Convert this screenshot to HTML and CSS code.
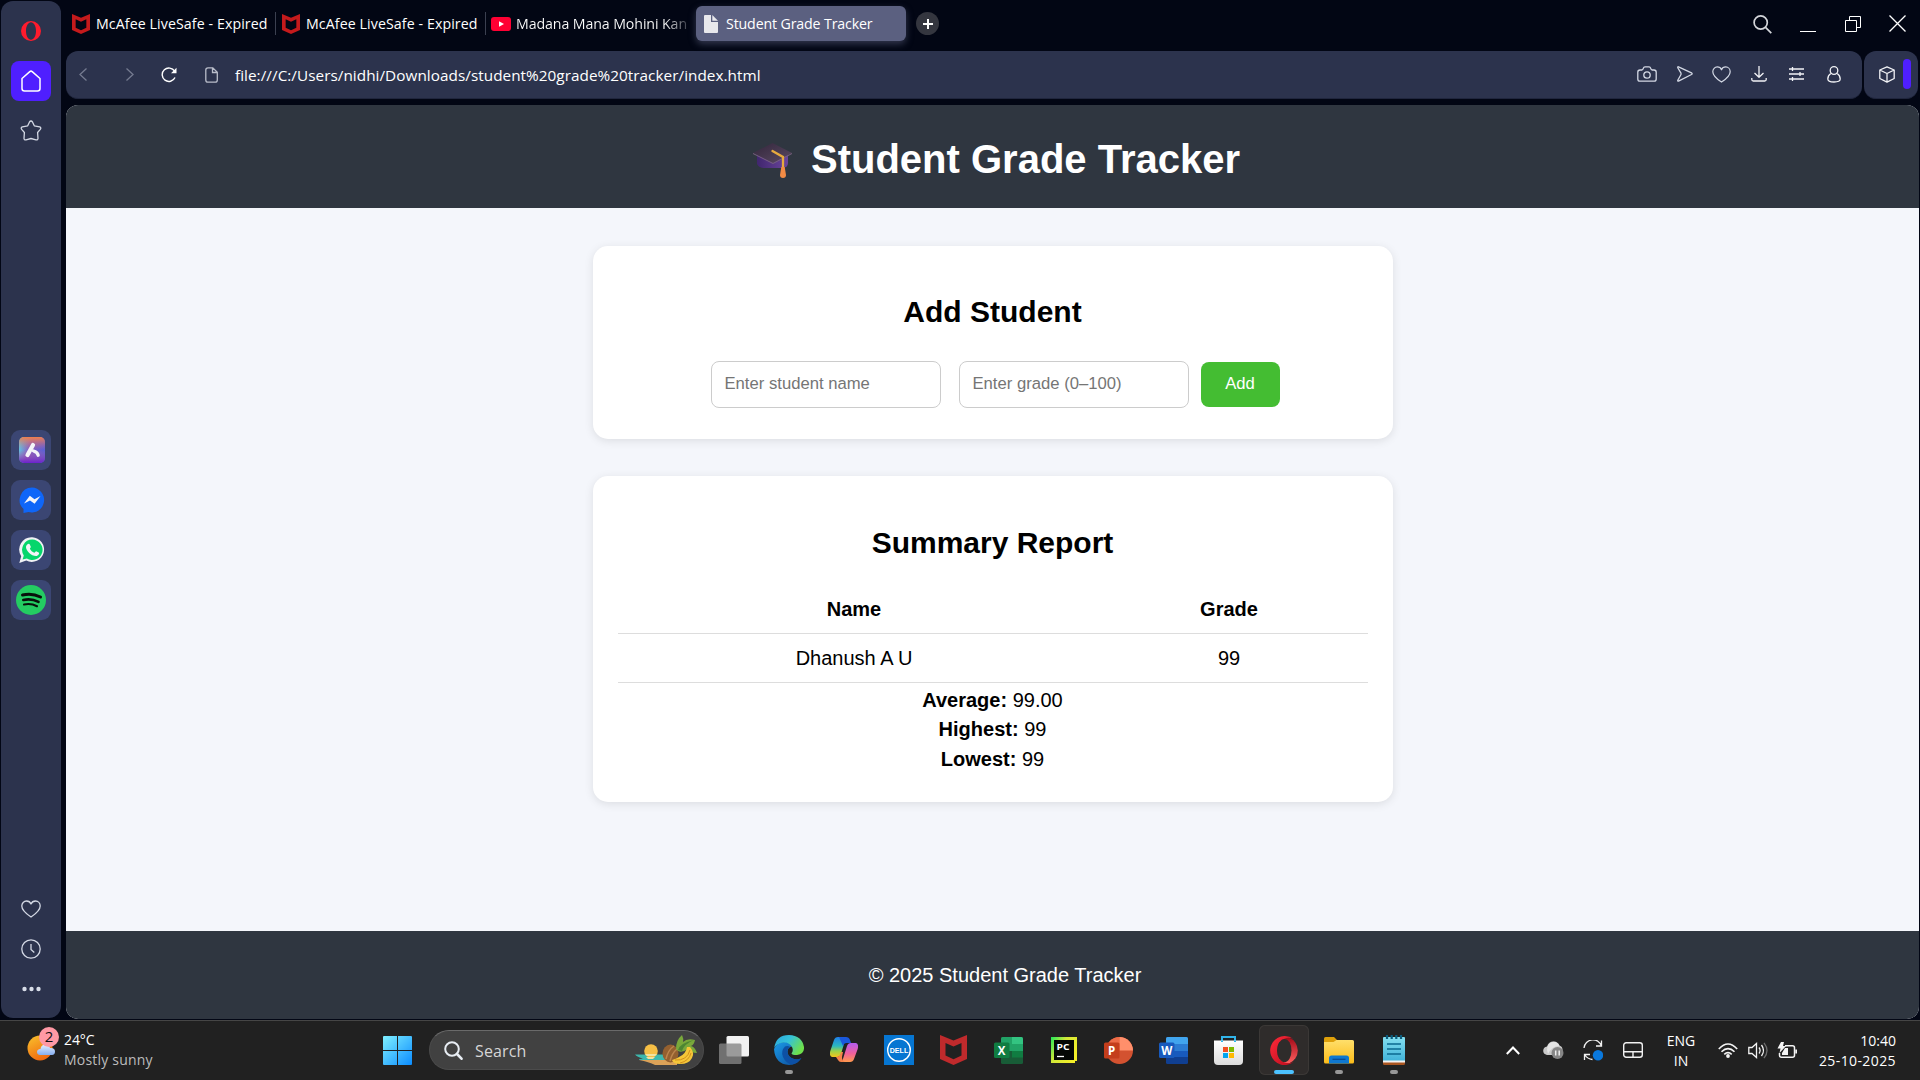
FILE: index.html
```html
<!DOCTYPE html>
<html lang="en">
<head>
<meta charset="utf-8">
<title>Student Grade Tracker</title>
<link rel="stylesheet" href="styles.css">
</head>
<body>
<svg class="defs" width="0" height="0">
  <defs>
    <linearGradient id="win" x1="0" y1="0" x2="1" y2="1"><stop offset="0" stop-color="#7ff0ff"/><stop offset="1" stop-color="#0b8cff"/></linearGradient>
    <linearGradient id="sun" x1="0" y1="0" x2=".5" y2="1"><stop offset="0" stop-color="#f9c32c"/><stop offset="1" stop-color="#f06a10"/></linearGradient>
    <linearGradient id="cloud" x1="0" y1="0" x2="0" y2="1"><stop offset="0" stop-color="#e6f0ff"/><stop offset="1" stop-color="#86aef0"/></linearGradient>
    <linearGradient id="edgeA" x1="0" y1="0" x2="1" y2=".5"><stop offset="0" stop-color="#2aa5e0"/><stop offset=".5" stop-color="#35c2d8"/><stop offset="1" stop-color="#6ee04c"/></linearGradient>
    <linearGradient id="edgeB" x1="0" y1="0" x2="1" y2="1"><stop offset="0" stop-color="#1b9be8"/><stop offset="1" stop-color="#0c4a98"/></linearGradient>
    <linearGradient id="copA" x1="0" y1="0" x2="0" y2="1"><stop offset="0" stop-color="#1f7fe8"/><stop offset=".45" stop-color="#2bb8c0"/><stop offset=".7" stop-color="#9ad24a"/><stop offset="1" stop-color="#f3c51b"/></linearGradient>
    <linearGradient id="copB" x1="0" y1="0" x2="0" y2="1"><stop offset="0" stop-color="#b45cf0"/><stop offset=".55" stop-color="#f0609c"/><stop offset="1" stop-color="#ff9a4c"/></linearGradient>
    <linearGradient id="folder" x1="0" y1="0" x2="0" y2="1"><stop offset="0" stop-color="#ffdf6b"/><stop offset="1" stop-color="#fcbc19"/></linearGradient>
    <linearGradient id="note" x1="0" y1="0" x2="0" y2="1"><stop offset="0" stop-color="#84dff0"/><stop offset="1" stop-color="#42b4da"/></linearGradient>
    <linearGradient id="opr" x1="0" y1="0" x2="1" y2="1"><stop offset="0" stop-color="#ff2a3a"/><stop offset="1" stop-color="#b80c1c"/></linearGradient>
    <linearGradient id="oprIn" x1="0" y1="0" x2="0" y2="1"><stop offset="0" stop-color="#a30a18"/><stop offset="1" stop-color="#ff6060"/></linearGradient>
    <linearGradient id="pyc" x1="0" y1="0" x2="1" y2=".6"><stop offset="0" stop-color="#20e85a"/><stop offset=".45" stop-color="#d2e838"/><stop offset="1" stop-color="#f3ee28"/></linearGradient>
    <linearGradient id="aria" x1="0" y1=".3" x2="1" y2=".6"><stop offset="0" stop-color="#58d4ea"/><stop offset=".4" stop-color="#8a5cc0"/><stop offset="1" stop-color="#5560d8"/></linearGradient>
    <linearGradient id="ariaTop" x1="0" y1="0" x2="0" y2="1"><stop offset="0" stop-color="#f0804c"/><stop offset=".5" stop-color="#c06a90" stop-opacity="0"/><stop offset="1" stop-color="#6a20d0"/></linearGradient>
    <linearGradient id="store" x1="0" y1="0" x2="0" y2="1"><stop offset="0" stop-color="#fff"/><stop offset="1" stop-color="#dcdcdc"/></linearGradient>
    <linearGradient id="cap" x1="0" y1="0" x2="1" y2="1"><stop offset="0" stop-color="#33263c"/><stop offset="1" stop-color="#5a4a62"/></linearGradient>
    <linearGradient id="capIn" x1="0" y1="0" x2="1" y2="0"><stop offset="0" stop-color="#40266e"/><stop offset="1" stop-color="#6b459c"/></linearGradient>
    <symbol id="mcafee" viewBox="0 0 27 30"><path fill-rule="evenodd" d="M0 0 13.500 5.500 27 0V24L13.500 30 0 24ZM5.500 8V20.500L13.500 24.200 21.500 20.500V8L13.500 11.500Z"/></symbol>
    <symbol id="heart" viewBox="0 0 20 18"><path d="M10 17C5.500 14 .8 10.500.8 6 .8 3.200 2.900 1 5.500 1 7.400 1 9.200 2 10 4 10.800 2 12.600 1 14.500 1c2.600 0 4.700 2.200 4.700 5 0 4.500-4.700 8-9.200 11Z"/></symbol>
  </defs>
</svg>

<div class="browser">
  <nav class="sidebar">
    <svg class="opera-logo" width="20" height="20" viewBox="0 0 20 20"><path fill="#ff1b2d" fill-rule="evenodd" d="M10 0a10 10 0 1 0 0 20 10 10 0 0 0 0-20Zm0 1.300c2.800 0 5 3.500 5 8.700s-2.200 8.700-5 8.700S5 15.200 5 10 7.200 1.300 10 1.300Z"/></svg>
    <span class="home"><svg class="line" width="20" height="22" viewBox="0 0 20 22"><path d="M1 8.500 8.800 1.600q1.200-1 2.400 0L19 8.500V18.500q0 2.500-2.500 2.500H3.500Q1 21 1 18.500Z"/></svg></span>
    <svg class="line star" width="22" height="21" viewBox="0 0 22 21"><path d="M9.400 2.200q1.600-2.400 3.200 0L14.300 5.800 19.600 6.900q2 .8.700 2.500L17.600 12.500 18 18.500q-.2 1.800-2 1.300L11 18.500 6 19.800q-1.800.5-2-1.300L4.400 12.500 1.700 9.400Q.4 7.700 2.400 6.900L7.700 5.800Z"/></svg>
    <div class="apps">
      <span class="app"><svg width="26" height="26" viewBox="0 0 26 26"><rect width="26" height="26" rx="5" fill="url(#aria)"/><rect width="26" height="26" rx="5" fill="url(#ariaTop)"/><path d="M8.500 18 14 8" stroke="#f4f4f8" stroke-width="4.200" stroke-linecap="round"/><path d="M14.500 14q4 1 4.700 4.300" stroke="#f4f4f8" stroke-width="3.200" stroke-linecap="round" fill="none"/></svg></span>
      <span class="app"><svg width="26" height="26" viewBox="0 0 26 26"><path fill="#0f66f8" d="M13 .5a12.500 12.500 0 1 1-3.500 24.600L4.500 26V22A12.500 12.500 0 0 1 13 .5Z"/><path fill="#f4f4f8" d="m5 16.500 5.800-7.700 4.700 3.400L21.500 9l-5.900 7.800-4.600-3.400Z"/></svg></span>
      <span class="app"><svg width="26" height="26" viewBox="0 0 26 26"><path fill="#f0f2f5" d="M13.300.3a12.300 12.300 0 1 1-6 23.300L.3 26l1.900-6.800A12.300 12.300 0 0 1 13.300.3Z"/><path fill="#06d66c" d="M13.300 2.600a10.200 10.200 0 1 1-5.400 18.800l-4.300 1.200 1.200-4.200A10.200 10.200 0 0 1 13.300 2.600Z"/><path fill="#f4f4f8" d="M8.600 7.300c1-1 1.900-.6 2.300.4l.9 2.100c.2.700-.8 1.500-.9 2 .9 2 2.500 3.200 4.400 4 .7-.2 1.200-1.600 1.900-1.500l2.500 1.200c1.300.8-.6 3.500-2.700 3.600C12.300 19 7 13.500 7 10.200c0-1.300.7-2.200 1.600-2.900Z"/></svg></span>
      <span class="app wide"><svg width="30" height="30" viewBox="0 0 30 30"><circle cx="15" cy="15" r="15" fill="#24cc62"/><g fill="none" stroke="#08110b" stroke-linecap="round"><path stroke-width="3" d="M6.500 10q9.500-2.300 18 2"/><path stroke-width="2.600" d="M7.300 15q8-1.900 15.200 1.900"/><path stroke-width="2.100" d="M8 19.500q7-1.500 13 1.700"/></g></svg></span>
    </div>
    <div class="side-foot">
      <svg class="line" width="20" height="18"><use href="#heart"/></svg>
      <svg class="line" width="20" height="20" viewBox="0 0 20 20"><circle cx="10" cy="10" r="9.200"/><path d="M10 5v5.500l3.300 3"/></svg>
      <svg width="19" height="6" viewBox="0 0 19 6" fill="#d8dde8"><circle cx="2.500" cy="3" r="2.200"/><circle cx="9.500" cy="3" r="2.200"/><circle cx="16.500" cy="3" r="2.200"/></svg>
    </div>
  </nav>

  <div class="main-col">
    <div class="tabbar">
      <div class="tab"><svg class="mc" width="18" height="20"><use href="#mcafee"/></svg><span>McAfee LiveSafe - Expired</span></div>
      <div class="tab"><svg class="mc" width="18" height="20"><use href="#mcafee"/></svg><span>McAfee LiveSafe - Expired</span></div>
      <div class="tab last"><svg width="20" height="14" viewBox="0 0 20 14"><rect width="20" height="14" rx="3" fill="#ff0033"/><path d="M8 4.300v5.400L13 7Z" fill="#fff"/></svg><span class="fade">Madana Mana Mohini Kan</span></div>
      <div class="tab active"><svg width="14" height="18" viewBox="0 0 14 18" fill="#e8e8ec"><path d="M1 0H7V7H14V17q0 1-1 1H1q-1 0-1-1V1Q0 0 1 0Z"/><path d="M8.300 0 14 5.800H8.300Z"/></svg><span>Student Grade Tracker</span></div>
      <span class="newtab"><svg width="10" height="10" viewBox="0 0 10 10"><path d="M5 0V10M0 5H10" stroke="#fff" stroke-width="2"/></svg></span>
      <div class="winbtns">
        <svg width="19" height="19" viewBox="0 0 19 19" fill="none" stroke="#d3d5da" stroke-width="1.700"><circle cx="7.700" cy="7.500" r="6.600"/><path d="m12.500 12.300 5.800 5.800"/></svg>
        <svg width="16" height="17" viewBox="0 0 16 17"><path d="M0 16.500H16" stroke="#fff"/></svg>
        <svg width="16" height="17" viewBox="0 0 16 17" fill="none" stroke="#fff"><path d="M.5 5.500h11v11H.5ZM4.500 5.500V1.500h11v11h-4"/></svg>
        <svg width="17" height="17" viewBox="0 0 17 17" stroke="#fff" stroke-width="1.300"><path d="m.5.5 16 16M16.500.5l-16 16"/></svg>
      </div>
    </div>

    <div class="toolbar">
      <div class="address">
        <div class="nav">
          <svg class="dim" width="8" height="13" viewBox="0 0 8 13"><path d="M7.500.5 1 6.500l6.500 6"/></svg>
          <svg class="dim" width="8" height="13" viewBox="0 0 8 13"><path d="M.5.500 7 6.500l-6.500 6"/></svg>
          <svg width="16" height="16" viewBox="0 0 16 16" fill="none" stroke="#fff" stroke-width="1.400"><path d="M13.600 4.200A6.700 6.700 0 1 0 14 10.500"/><path fill="#fff" stroke="none" d="M15.500.8V6.300H10Z"/></svg>
          <svg width="13" height="16" viewBox="0 0 13 16" fill="none" stroke="#b9bdca" stroke-width="1.300"><path d="M3 .8H7.800L12.300 5.300V13q0 2.200-2.200 2.200H3Q.8 15.200.8 13V3Q.8.800 3 .8ZM7.500 1V5.500H12"/></svg>
        </div>
        <span class="url">file:///C:/Users/nidhi/Downloads/student%20grade%20tracker/index.html</span>
        <div class="tools">
          <svg class="line" width="20" height="16" viewBox="0 0 20 16"><path d="M3 4H5Q6 3.500 6.300 2.300 6.700.8 8 .8h4q1.300 0 1.700 1.500Q14 3.500 15 4h2q2.200 0 2.200 2.200V13q0 2.200-2.200 2.200H3Q.8 15.200.8 13V6.200Q.8 4 3 4Z"/><circle cx="10" cy="9" r="3.200"/></svg>
          <svg class="line send" width="16" height="16" viewBox="0 0 16 16"><path d="M1.500.8 14.500 6.800q1.300.9 0 1.700L1.500 15.200Q.3 15.300.9 14L4 8.500V7.200L.9 2Q.3.600 1.500.8Z"/></svg>
          <svg class="line fav" width="19" height="17" viewBox="0 0 20 18"><use href="#heart"/></svg>
          <svg class="line white save" width="16" height="16" viewBox="0 0 16 16"><path d="M8 0V11M3.500 7 8 11.200 12.500 7M.8 12V13.500q0 1.500 1.500 1.500H13.700q1.500 0 1.500-1.500V12"/></svg>
          <svg class="line white setup" width="15" height="14" viewBox="0 0 15 14"><path d="M0 2H15M0 7H15M0 12H15M3.500 0V4M11 5V9M3.500 10V14"/></svg>
          <svg class="line white user" width="14" height="17" viewBox="0 0 14 17"><circle cx="7" cy="4.500" r="3.800"/><path d="M3.800 7.500Q.8 9.500.8 13q0 3 6.200 3t6.200-3q0-3.500-3-5.500"/></svg>
        </div>
      </div>
      <div class="cube">
        <svg class="line white" width="16" height="17" viewBox="0 0 16 17"><path d="M8 .8 15.200 4V12.500L8 16.200.8 12.500V4ZM.8 4 8 7.500 15.200 4M8 7.500V16"/></svg>
        <span class="marker"></span>
      </div>
    </div>

    <div class="page">
      <header class="page-head">
        <svg width="40" height="36" viewBox="0 0 40 36"><path fill="url(#capIn)" d="M4 11V21Q6 25 11 25H30Q35 24 35 20V10Z"/><path fill="url(#cap)" d="M19.500 0 39 10 20 20 0 10Z"/><path d="M0 10.500 20 20.500 39 10.500" fill="none" stroke="#77617f"/><path d="M19.500 8 30 14V26" fill="none" stroke="#e7aa3e" stroke-width="2.300" stroke-linecap="round"/><path fill="#f38b45" d="M28.300 24h3.400l1.300 8q0 3-3 3t-3-3Z"/></svg>
        <h1>Student Grade Tracker</h1>
      </header>
      <main class="content">
        <section class="card">
          <h2>Add Student</h2>
          <form class="add-form">
            <input type="text" placeholder="Enter student name">
            <input type="text" placeholder="Enter grade (0–100)">
            <button type="button">Add</button>
          </form>
        </section>
        <section class="card report">
          <h2>Summary Report</h2>
          <table>
            <thead><tr><th>Name</th><th class="grade">Grade</th></tr></thead>
            <tbody><tr><td>Dhanush A U</td><td>99</td></tr></tbody>
          </table>
          <div class="stats">
            <p><strong>Average:</strong> 99.00</p>
            <p><strong>Highest:</strong> 99</p>
            <p><strong>Lowest:</strong> 99</p>
          </div>
        </section>
      </main>
      <footer class="page-foot">© 2025 Student Grade Tracker</footer>
    </div>
  </div>
</div>

<div class="taskbar">
  <div class="weather">
    <svg width="34" height="36" viewBox="0 0 34 36"><circle cx="13" cy="22" r="12.500" fill="url(#sun)"/><path fill="url(#cloud)" d="M13 29q-3-.3-3-3t3.500-3q.5-4.500 5-4.500 3.500 0 4.500 3.500 5-.5 5 3.500 0 3.200-3 3.500Z"/><circle cx="22" cy="11" r="10" fill="#ff99a4"/><text x="22" y="16" text-anchor="middle" class="badge">2</text></svg>
    <div class="wtext"><span>24°C</span><span class="sub">Mostly sunny</span></div>
  </div>

  <div class="center">
    <span class="start"><svg width="29" height="29" viewBox="0 0 29 29"><path fill="url(#win)" d="M1 0H14V14H0V1Q0 0 1 0ZM15 0H28Q29 0 29 1V14H15ZM0 15H14V29H1Q0 29 0 28ZM15 15H29V28q0 1-1 1H15Z"/></svg></span>
    <div class="search">
      <svg width="19" height="19" viewBox="0 0 19 19" fill="none" stroke="#e8edf3" stroke-width="2"><circle cx="8" cy="8" r="6.800"/><path d="m13 13 4.500 4.700" stroke-width="2.600" stroke-linecap="round"/></svg>
      <span>Search</span>
      <svg class="fruit" width="62" height="31" viewBox="0 0 62 31"><path fill="#3db8ad" d="M0 19.500H34V25H4Q4 23.500 8 23.500 2 22 0 19.500Z"/><path fill="#dba258" d="M4 25H42V30H20Q14 27 4 25Z"/><circle cx="16" cy="16" r="6.800" fill="#f6bf45"/><path fill="#f2e2a0" d="M10 19h12l-2 2h-8Zm1 3h9l-2 2h-5Z"/><ellipse cx="35.500" cy="18.500" rx="8" ry="9" fill="#94602f"/><path d="M31 24q2-9 8-13M35 26q2-8 7-12" stroke="#bd854d" stroke-width="1.500" fill="none"/><path fill="#79a83b" d="M41 14Q41 5 47 0q2 4 1 7 4-4 12-2-1 5-4 6 4 1 6 7-6 0-9-4-6 4-10 2Z"/><path fill="#4c8632" d="M43 15Q45 8 59 5 49 9 47 16Z"/><path fill="#f5c638" d="M52 12h3q5 6 2 11-3 6-12 6-7 0-8-4 4-1 7-3 7-3 8-10Z"/><path d="M40 25q12 1 15-10M45 28q9-2 11-10" stroke="#d38f1c" stroke-width="1" fill="none"/></svg>
    </div>
    <span class="task"><svg width="30" height="28" viewBox="0 0 30 28"><rect x="7.500" width="22.500" height="20.500" rx="1.500" fill="#f2f2f2"/><rect y="7.500" width="22.500" height="20.500" rx="1.500" fill="#858585" fill-opacity=".8"/></svg></span>
    <span class="task run"><svg width="30" height="30" viewBox="0 0 30 30"><path fill="url(#edgeB)" d="M0 14Q3 7 11 7q7 0 8.500 5-1.500-.8-3.500 0-2.500 1.500-2.500 4.500 0 4 4 6.500 4.500 2.500 9.500.5Q23 30 15 30 1 29 0 14Z"/><path fill="#0d50a4" d="M11 11.500Q6.500 16 9 22q3 6.500 9 7.500 6-1 9.500-6.500-5 2.500-10 0-4-2.500-4-6.500Q13.500 13 16 12q-2-1.500-5-.5Z"/><path fill="url(#edgeA)" d="M.2 13Q2 0 15 0 28 .5 30 12q.5 7-7 8-5 0-5.500-1.500 2.300-3 .5-6.500Q15 7 10 7.500 3 8 .2 13Z"/></svg></span>
    <span class="task"><svg width="28" height="26" viewBox="0 0 28 26"><path fill="url(#copA)" d="M8 0h8l-5 17Q10 20 7 20H2Q-1 19 .3 14L4 3Q5 0 8 0Z"/><path fill="#1a58dc" d="M9 0h7q3 0 4 3l1 3h-5q-2 0-3 3Z"/><path fill="url(#copB)" d="M20 25h-8l5-16Q18 6 21 6h5q3 1 1.700 6L24 22q-1 3-4 3Z"/><path fill="#f6824a" d="M6 20q3 0 4-2l1-3 2 0-1 5q0 4 3 5h-4q-2 0-3-2Z"/></svg></span>
    <span class="task"><svg width="30" height="30" viewBox="0 0 30 30"><rect width="30" height="30" fill="#0676d2"/><circle cx="15" cy="15" r="11.300" fill="none" stroke="#fff" stroke-width="1.400"/><text x="15" y="18" text-anchor="middle" class="dell" textLength="18.500" lengthAdjust="spacingAndGlyphs">DELL</text></svg></span>
    <span class="task mct"><svg width="27" height="30"><use href="#mcafee"/></svg></span>
    <span class="task"><svg width="29" height="27" viewBox="0 0 29 27"><rect x="7" width="22" height="27" rx="1.500" fill="#185c37"/><path fill="#21a366" d="M8.500 0H18V14H7V1.500Q7 0 8.500 0Z"/><path fill="#33c481" d="M18 0h9.500Q29 0 29 1.500V7H18Z"/><path fill="#107c41" d="M18 14H29v6.500H18Z"/><path fill="#21a366" d="M18 7H29v7H18Z"/><rect y="5.500" width="15.500" height="15.500" rx="1.500" fill="#107c41"/><text x="7.700" y="17.700" text-anchor="middle" class="office">X</text></svg></span>
    <span class="task"><svg width="26" height="26" viewBox="0 0 26 26"><path fill="url(#pyc)" d="M0 0H26V24H24V26H0Z"/><rect x="3" y="3" width="20" height="20" fill="#050805"/><text x="5.500" y="13" class="pc" textLength="13" lengthAdjust="spacingAndGlyphs">PC</text><path d="M6 19.500h7" stroke="#fff" stroke-width="1.300"/></svg></span>
    <span class="task"><svg width="29" height="27" viewBox="0 0 29 27"><circle cx="15.500" cy="13.500" r="13.500" fill="#d35230"/><path fill="#ed6c47" d="M15.500 0V13.500H2A13.500 13.500 0 0 1 15.500 0Z"/><path fill="#ff8f6b" d="M15.500 0A13.500 13.500 0 0 1 29 13.500H15.500Z"/><rect y="5.500" width="15.500" height="16" rx="1.500" fill="#c43e1c"/><text x="7.700" y="17.900" text-anchor="middle" class="office">P</text></svg></span>
    <span class="task"><svg width="29" height="27" viewBox="0 0 29 27"><rect x="7" width="22" height="27" rx="1.500" fill="#103f91"/><path fill="#41a5ee" d="M8.500 0h19Q29 0 29 1.500V7H7V1.500Q7 0 8.500 0Z"/><path fill="#2b7cd3" d="M7 7H29v7H7Z"/><path fill="#185abd" d="M7 14H29v6H7Z"/><rect y="5.500" width="15.500" height="15.500" rx="1.500" fill="#185abd"/><text x="7.700" y="17.700" text-anchor="middle" class="office">W</text></svg></span>
    <span class="task"><svg width="29" height="29" viewBox="0 0 29 29"><path d="M8 6V1H21V6" fill="none" stroke="#31b5ea" stroke-width="2"/><path fill="url(#store)" d="M0 4.500H29V25q0 4-4 4H4Q0 29 0 25Z"/><path d="M8 4.500v1.500M21 4.500v1.500" stroke="#31b5ea" stroke-width="2"/><path fill="#f25022" d="M9 11h5v5H9Z"/><path fill="#7fba00" d="M15 11h5v5h-5Z"/><path fill="#00a4ef" d="M9 17h5v5H9Z"/><path fill="#ffb900" d="M15 17h5v5h-5Z"/></svg></span>
    <span class="task current"><svg width="29" height="29" viewBox="0 0 29 29"><path fill="url(#oprIn)" d="M10 4.500Q14 1 19 1.500a14 14 0 0 1 0 26Q14 28 10 24.500Z"/><path fill="url(#opr)" fill-rule="evenodd" d="M14.500 0a14.500 14.500 0 1 0 9 26Q19 28 15 26.500 7 24 7 14.500T15 2.500Q19 1 23.500 3A14.500 14.500 0 0 0 14.500 0Z"/><ellipse cx="14.500" cy="14.500" rx="7" ry="11.500" fill="#2f2c2b"/></svg></span>
    <span class="task run"><svg width="30" height="27" viewBox="0 0 30 27"><path fill="#dea00a" d="M1.500 0H10l3 3V9H0V1.500Q0 0 1.500 0Z"/><path fill="url(#folder)" d="M0 5H9.500L12.500 3H28.500Q30 3 30 4.500V25q0 1.500-1.500 1.500H1.500Q0 26.500 0 25Z"/><path fill="#0f78d0" d="M5 26.500V21q0-2.500 2.500-2.500h15Q25 18.500 25 21v5.500Z"/><path d="M8.500 22.300h13" stroke="#0a4a94" stroke-width="1.300"/></svg></span>
    <span class="task run"><svg width="22" height="30" viewBox="0 0 22 30"><path fill="#a95520" d="M0 26H22v2.500q0 1.500-1.500 1.500h-19Q0 30 0 28.500Z"/><path fill="#f2f2f2" d="M0 24H22v3.500H0Z"/><path fill="url(#note)" d="M1 2H21Q22 2 22 3V25.500H0V3Q0 2 1 2Z"/><path d="M4 9H18M4 14H18M4 19H18" stroke="#0b6a90" stroke-width="1.700"/><path d="M4 0V4M8.700 0V4M13.300 0V4M18 0V4" stroke="#0b5c7c" stroke-width="2.200"/></svg></span>
  </div>

  <div class="tray">
    <svg width="14" height="9" viewBox="0 0 14 9" fill="none" stroke="#fff" stroke-width="2"><path d="m.8 8 6.200-6.500L13.200 8"/></svg>
    <svg class="t-cloud" width="21" height="18" viewBox="0 0 21 18"><path fill="#c9c9c9" d="M4 14Q0 13 .2 9.500.5 6 4 5.500 6 0 11 .5q4 .3 5.500 4 3 1 3 4V14Z"/><path fill="#efefef" d="M5 13Q9 5 16.500 5 14 0 9 1 4 3 4 9Z" opacity=".7"/><circle cx="14.500" cy="12" r="6" fill="#868686"/><path d="M12.700 9.500v5M16.200 9.500v5" stroke="#eee" stroke-width="1.500"/></svg>
    <svg class="t-sync" width="20" height="21" viewBox="0 0 20 21" fill="none" stroke="#f1f1f1" stroke-width="1.300"><path d="M1 8A9 9 0 0 1 18.500 6M18.500.5V6H13M9.500 19.500Q4.500 19 2 15M1.500 20V14.500H7"/><circle cx="15" cy="15.300" r="5.200" fill="#0a78dc" stroke="none"/></svg>
    <svg class="t-pad" width="20" height="16" viewBox="0 0 20 16" fill="none" stroke="#f1f1f1" stroke-width="1.400"><rect x=".7" y=".7" width="18.600" height="14.600" rx="2.500"/><path d="M1 9.800H19M10 9.800V15"/></svg>
    <div class="lang"><span>ENG</span><span>IN</span></div>
    <svg class="t-wifi" width="20" height="15" viewBox="0 0 20 15" fill="none" stroke="#f4f4f4" stroke-width="1.600"><path d="M.8 6Q10-4 19.200 6M3.500 8.800q6.500-6.500 13 0M6.300 11.300q3.700-3.500 7.400 0"/><circle cx="10" cy="13" r="1.900" fill="#f4f4f4" stroke="none"/></svg>
    <svg class="t-vol" width="20" height="17" viewBox="0 0 20 17" fill="none" stroke="#f4f4f4" stroke-width="1.300"><path d="M.8 5.500H4L8.500 1.500v14L4 11.500H.8Z"/><path d="M11 5.500q2.200 3 0 6M13.500 3q4 5.500 0 11"/><path d="M16 .8q6 7.700 0 15.400" stroke="#6d6d6d"/></svg>
    <svg class="t-bat" width="21" height="17" viewBox="0 0 21 17" fill="none" stroke="#f4f4f4" stroke-width="1.500"><path d="M8 3.800h7.500q2 0 2 2v7.400q0 2-2 2H4.500q-2 0-2-2V11"/><path fill="#f4f4f4" stroke="none" d="M8 6h3v7H5v-2ZM18.300 7.500H20v4h-1.700ZM4 0H7L6 4h3L2.500 11 3.500 6.500H.5Z"/></svg>
    <div class="clock"><span>10:40</span><span class="date">25-10-2025</span></div>
  </div>
</div>
</body>
</html>
```
FILE: styles.css
```css
* { box-sizing: border-box; }
body {
  margin: 0;
  width: 1920px;
  height: 1080px;
  overflow: hidden;
  display: flex;
  flex-direction: column;
  background: #020614;
  color: #fff;
  font-family: "Open Sans", "Noto Sans", sans-serif;
}
svg { display: block; flex: none; }
.defs { position: absolute; }
.line { fill: none; stroke: #d3d8e4; stroke-width: 1.3; stroke-linejoin: round; }
.line.white { stroke: #f2f3f6; }
.dim { fill: none; stroke: #757b90; stroke-width: 1.3; }

.browser { height: 1019px; display: flex; gap: 5px; padding-left: 1px; }

/* sidebar */
.sidebar {
  width: 60px;
  height: 1017px;
  margin-top: 1px;
  padding-top: 20px;
  border-radius: 12px;
  background: #2c334d;
  display: flex;
  flex-direction: column;
  align-items: center;
}
.home {
  width: 40px;
  height: 40px;
  margin-top: 20px;
  border-radius: 8px;
  background: #4f1fff;
  display: grid;
  place-items: center;
}
.home .line { stroke: #fff; stroke-width: 1.5; }
.star { margin: 19px 1px 0 0; }
.apps { margin-top: 289px; display: flex; flex-direction: column; gap: 10px; }
.app {
  width: 40px;
  height: 40px;
  padding-left: 1px;
  border-radius: 9px;
  background: #3b4673;
  display: grid;
  place-items: center;
}
.app.wide { padding-left: 0; }
.side-foot {
  margin: 280px 1px 0 0;
  display: flex;
  flex-direction: column;
  align-items: center;
  gap: 21px;
}
.side-foot svg:last-child { margin: 6px 0 0 1px; }

.main-col { width: 1853px; display: flex; flex-direction: column; }

/* tabs */
.tabbar { height: 51px; padding-top: 6px; display: flex; align-items: flex-start; font-size: 14.2px; }
.tab {
  width: 210px;
  height: 35px;
  padding-left: 6px;
  display: flex;
  align-items: center;
  gap: 6px;
  position: relative;
  white-space: nowrap;
}
.tab span { letter-spacing: 0.09px; }
.tab:not(.active):not(.last)::after {
  content: "";
  position: absolute;
  right: 0;
  top: 6px;
  width: 1px;
  height: 23px;
  background: #3b4050;
}
.tab.last { padding-left: 5px; gap: 5px; }
.tab .fade {
  letter-spacing: -0.1px;
  padding-right: 4px;
  background: linear-gradient(90deg, #fff 148px, #fff2 174px);
  -webkit-background-clip: text;
  background-clip: text;
  color: transparent;
}
.mc, .mct { fill: #c41a1c; }
.mct { fill: #c02a2c; }
.tab.active {
  border-radius: 6px;
  background: #5b6080;
  padding-left: 8px;
  gap: 8px;
  box-shadow: 0 3px 7px rgba(91, 96, 128, .55);
}
.tab.active span { letter-spacing: -0.14px; }
.newtab {
  width: 23px;
  height: 23px;
  margin: 6px 0 0 10px;
  border-radius: 50%;
  background: #34363f;
  display: grid;
  place-items: center;
}
.winbtns { margin: 9px 13px 0 auto; display: flex; gap: 28.500px; }

/* address bar */
.toolbar { height: 48px; display: flex; gap: 2px; }
.address {
  width: 1796px;
  padding: 0 21px 0 13px;
  border-radius: 12px;
  background: #2c334d;
  border-bottom: 1px solid #20263d;
  display: flex;
  align-items: center;
}
.nav { display: flex; align-items: center; }
.nav svg:nth-child(2) { margin-left: 39px; }
.nav svg:nth-child(3) { margin-left: 27px; }
.nav svg:nth-child(4) { margin-left: 28px; }
.url { margin-left: 17px; font-size: 15.3px; letter-spacing: 0.04px; white-space: nowrap; }
.tools { margin-left: auto; padding-bottom: 1px; display: flex; align-items: center; }
.send { margin-left: 20px; }
.fav { margin-left: 19px; }
.save { margin-left: 20.500px; }
.setup { margin-left: 21.500px; }
.user { margin-left: 23.500px; }
.cube {
  width: 54px;
  padding: 0 7px 0 15px;
  border-radius: 12px;
  background: #2c334d;
  border-bottom: 1px solid #20263d;
  display: flex;
  align-items: center;
  justify-content: space-between;
}
.marker { width: 8px; height: 30px; margin-bottom: 1px; border-radius: 4px; background: #4f1fff; }

/* web page */
.page {
  height: 914px;
  margin-top: 6px;
  border-radius: 12px;
  overflow: hidden;
  background: #f4f6fb;
  color: #000;
  display: flex;
  flex-direction: column;
  font: 20px/1.2 "Liberation Sans", Arial, sans-serif;
}
.page-head {
  height: 103px;
  padding-left: 8px;
  background: #2f3640;
  color: #fff;
  display: flex;
  align-items: center;
  justify-content: center;
  gap: 18px;
}
.page-head svg { margin-top: 8px; }
h1 { margin: 4px 0 0; font-size: 40px; line-height: 46px; }
.content { flex: 1; padding: 38px 0 0; display: flex; flex-direction: column; align-items: center; gap: 37px; }
.card {
  width: 800px;
  height: 193px;
  padding: 25px;
  border-radius: 15px;
  background: #fff;
  box-shadow: 0 2px 10px rgba(0, 0, 0, .1);
  text-align: center;
}
.report { height: 326px; }
h2 { margin: 23px 0 31px; font-size: 30px; line-height: 35px; }
.report h2 { margin-top: 24px; margin-bottom: 24px; }
.add-form { display: flex; align-items: center; padding-left: 93px; }
input, button { font: 16.67px "Liberation Sans", Arial, sans-serif; }
input {
  width: 230px;
  height: 47px;
  margin-right: 18px;
  padding: 0 13px 1px;
  border: 1px solid #ccc;
  border-radius: 8px;
  background: #fff;
}
input::placeholder { color: #757575; }
input:nth-child(2) { margin-right: 12px; }
button { width: 79px; height: 45px; padding: 0 0 1px; border: 0; border-radius: 8px; background: #44bd32; color: #fff; }
.add-form { margin-top: 32px; }
table { width: 750px; border-collapse: collapse; table-layout: fixed; }
th, td { height: 49px; padding: 0 0 0 1px; border-bottom: 1px solid #ddd; }
th { padding-top: 2px; }
.grade { width: 278px; }
.stats { margin-top: 3px; }
.stats p { margin: 0; line-height: 29.500px; }
.page-foot {
  height: 88px;
  padding-left: 25px;
  background: #2f3640;
  color: #fff;
  display: grid;
  place-items: center;
}

/* taskbar */
.taskbar {
  height: 61px;
  background: #212121;
  border-top: 1px solid #020614;
  box-shadow: inset 0 1px #464646;
  display: flex;
  font-size: 14px;
}
.weather { width: 356px; padding: 6px 0 0 27px; display: flex; gap: 3px; }
.badge { font: 15px "Open Sans", sans-serif; fill: #111; }
.wtext { display: flex; flex-direction: column; line-height: 20px; margin-top: 4px; letter-spacing: -0.1px; }
.sub { color: #bcbcbc; letter-spacing: 0.2px; }
.center { display: flex; align-items: flex-start; }
.start { width: 73px; padding: 16px 0 0 27px; }
.search {
  width: 275px;
  height: 40px;
  margin-top: 10px;
  padding: 0 6px 0 14px;
  border-radius: 20px;
  border: 1px solid #4b4b4b;
  border-top-color: #6a6a6a;
  background: #414141;
  display: flex;
  align-items: center;
  font-size: 16px;
  color: #d6d6d6;
}
.search span { margin-left: 12px; padding-top: 1px; letter-spacing: 0.15px; }
.fruit { margin-left: auto; }
.task {
  width: 50px;
  height: 50px;
  margin: 5px 0 0 5px;
  padding-right: 1px;
  border-radius: 6px;
  display: grid;
  place-items: center;
  position: relative;
}
.task.run, .task.current { padding-right: 0; }
.current { background: #2f2c2b; box-shadow: inset 0 0 0 1px #3b3836; }
.run::after, .current::after {
  content: "";
  position: absolute;
  bottom: 1px;
  left: 21px;
  width: 8px;
  height: 4px;
  border-radius: 2px;
  background: #979797;
}
.current::after { left: 15px; width: 20px; background: #4cc2ff; }
.dell { font: bold 7.5px "Liberation Sans", sans-serif; fill: #fff; }
.office { font: bold 11.5px "Open Sans", sans-serif; fill: #fff; }
.pc { font: bold 9.5px "Open Sans", sans-serif; fill: #fff; }
.tray { margin-left: auto; padding-right: 24px; height: 60px; display: flex; align-items: center; }
.t-cloud { margin-left: 23px; }
.t-sync { margin-left: 19px; }
.t-pad { margin-left: 20px; }
.lang { width: 32px; margin-left: 22px; text-align: center; }
.lang, .clock { display: flex; flex-direction: column; line-height: 20px; padding-top: 1px; }
.t-wifi { margin-left: 21px; }
.t-vol { margin-left: 10px; }
.t-bat { margin-left: 9px; }
.clock { width: 84px; margin-left: 14px; text-align: right; letter-spacing: 0; }
.date { letter-spacing: 0.4px; }
```
